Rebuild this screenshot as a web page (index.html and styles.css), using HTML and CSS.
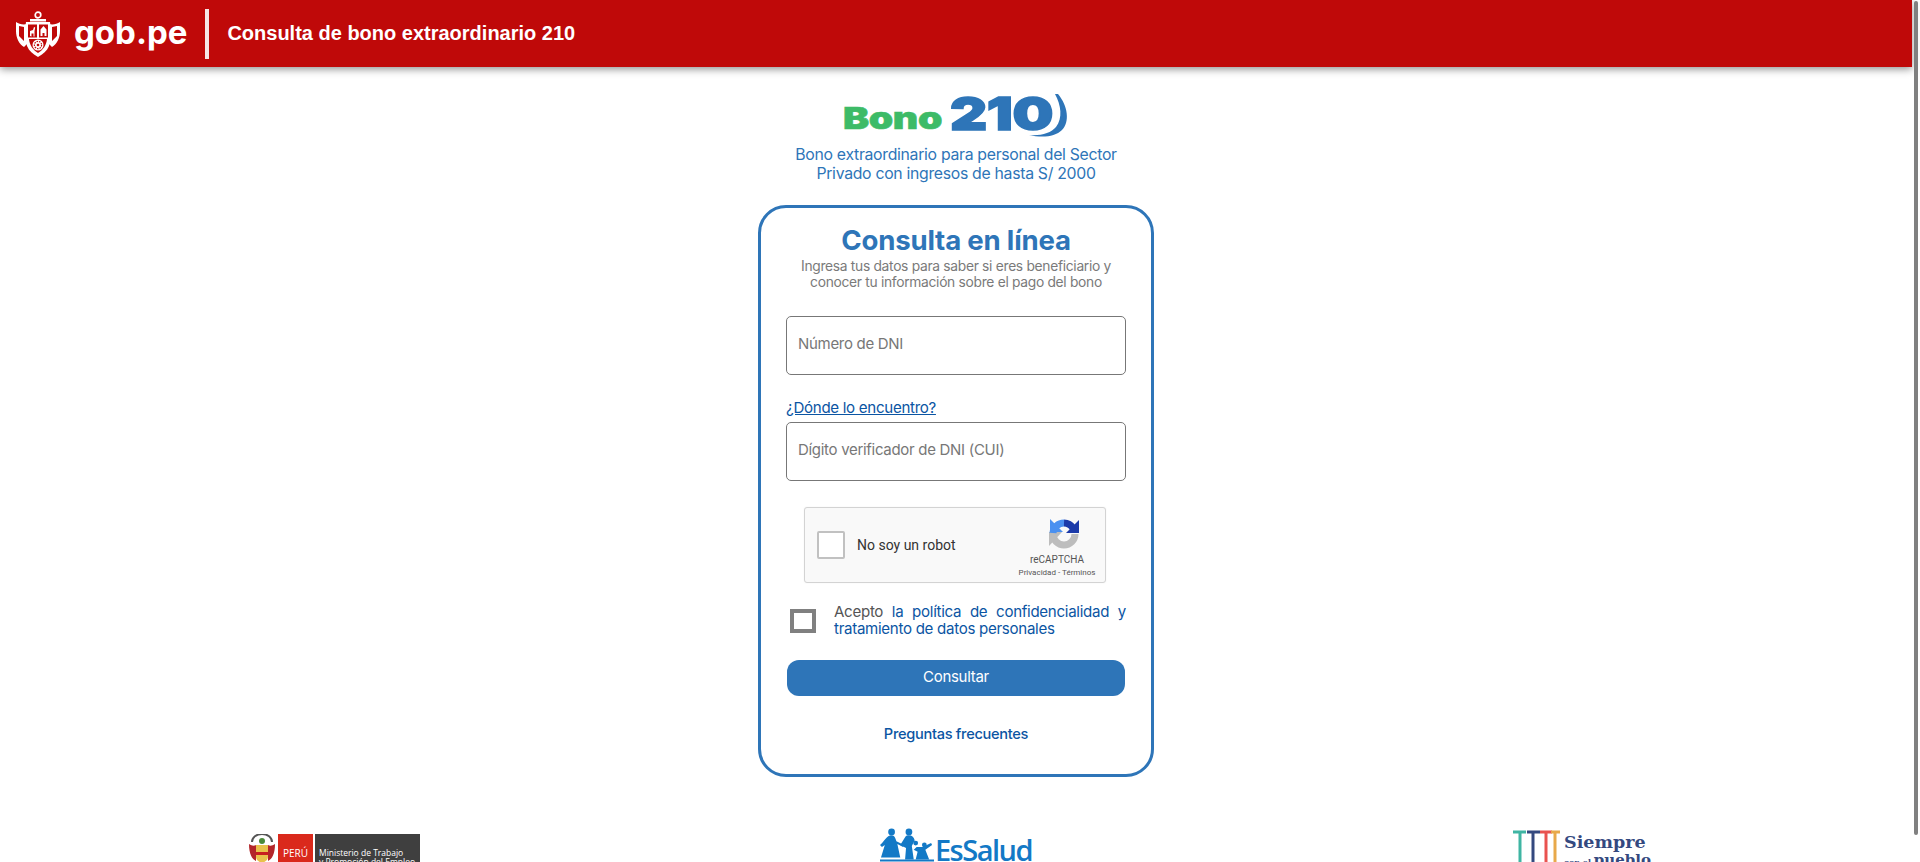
FILE: index.html
```html
<!DOCTYPE html>
<html lang="es">
<head>
<meta charset="utf-8">
<title>Consulta de bono extraordinario 210</title>
<link rel="stylesheet" href="styles.css">
</head>
<body>
<div class="page">
<header class="topbar">
  <svg class="emblem" viewBox="0 0 46 46" aria-hidden="true">
    <circle cx="23" cy="4" r="2.800" fill="none" stroke="#fff" stroke-width="1.700"/>
    <path d="M15 8h16v2.500H15z" fill="#fff"/>
    <path d="M1 11c3 2 7 3 11 2v20l-3 3c-5-3-8-9-8-16zM45 11c-3 2-7 3-11 2v20l3 3c5-3 8-9 8-16z" fill="#fff"/>
    <path d="M4 15l5 1v14l-5-5zM42 15l-5 1v14l5-5z" fill="#bf0909"/>
    <path d="M11 11h24c1.500 9 1 17-1 24-2 5-6 8-11 11-5-3-9-6-11-11-2-7-2.500-15-1-24z" fill="#fff"/>
    <path d="M13 13.500h9v13h-9zM24 13.500h9v13h-9z" fill="#bf0909"/>
    <path d="M15 25v-5l3-1 1-3 1.200.500-.7 3.500v5.500h-1v-3h-2v3zM25.500 25v-6.500l3-3.500 3 3.500v6.500h-2v-3h-2v3z" fill="#fff"/>
    <path d="M14 28h18c-.5 6-4 11-9 14-5-3-8.500-8-9-14z" fill="#bf0909"/>
    <circle cx="23" cy="34" r="5.500" fill="#fff"/>
    <circle cx="23" cy="34" r="3.600" fill="none" stroke="#bf0909" stroke-width="1.200" stroke-dasharray="1.500 1"/>
    <circle cx="23" cy="34" r="1.300" fill="#bf0909"/>
  </svg>
  <span class="brand">gob.pe</span>
  <span class="divider"></span>
  <h1 class="page-title">Consulta de bono extraordinario 210</h1>
</header>

<main class="content">
  <svg class="bono-logo" viewBox="0 0 230 50" role="img" aria-label="Bono 210">
    <text class="bono-word" x="2" y="36" textLength="99" lengthAdjust="spacingAndGlyphs">Bono</text>
    <text class="bono-num" x="109" y="37" textLength="103" lengthAdjust="spacingAndGlyphs">210</text>
    <path class="bono-arc" d="M217 1c10 12 12 28 4 36-7 7-20 8-33 5 12 1 22-2 27-8 7-9 5-22-1-33z"/>
  </svg>
  <p class="tagline">Bono extraordinario para personal del Sector<br>Privado con ingresos de hasta S/ 2000</p>

  <section class="card">
    <h2 class="card-title">Consulta en línea</h2>
    <p class="card-sub">Ingresa tus datos para saber si eres beneficiario y<br>conocer tu información sobre el pago del bono</p>

    <div class="field first-field"><span class="placeholder">Número de DNI</span></div>
    <a class="where-link" href="#">¿Dónde lo encuentro?</a>
    <div class="field"><span class="placeholder">Dígito verificador de DNI (CUI)</span></div>

    <div class="captcha">
      <span class="captcha-box"></span>
      <span class="captcha-label">No soy un robot</span>
      <div class="captcha-brand">
        <svg class="captcha-icon" viewBox="0 0 32 32" aria-hidden="true">
          <path d="M5 16a11 11 0 0 0 22 0" class="cap-grey"/>
          <path d="M1 14h13L1 28z" fill="#bdbdbd"/>
          <path d="M16 5a11 11 0 0 0-11 10" class="cap-light"/>
          <path d="M2 1l13 13H2z" fill="#4a90f0"/>
          <path d="M16 5a11 11 0 0 1 9 5" class="cap-dark"/>
          <path d="M31 2v13H18z" fill="#1c3aa9"/>
        </svg>
        <span class="captcha-name">reCAPTCHA</span>
        <span class="captcha-links">Privacidad - Términos</span>
      </div>
    </div>

    <div class="consent">
      <span class="consent-box"></span>
      <p class="consent-text"><span class="consent-lead">Acepto</span> <a href="#">la política de confidencialidad y tratamiento de datos personales</a></p>
    </div>

    <button class="submit" type="button">Consultar</button>
    <a class="faq" href="#">Preguntas frecuentes</a>
  </section>

  <footer class="logos">
    <div class="logo-cell">
      <div class="mintra">
        <svg class="mintra-shield" viewBox="0 0 28 30" aria-hidden="true">
          <path d="M4 8a10 8 0 0 1 20 0" fill="none" stroke="#555" stroke-width="2"/>
          <circle cx="14" cy="7" r="3" fill="#4a8a3a"/>
          <path d="M1 10c3 2 5 2 7 1v16C4 25 1 20 1 10zM27 10c-3 2-5 2-7 1v16c4-2 7-7 7-17z" fill="#b3262a"/>
          <path d="M8 11h12v12c0 3-3 5-6 6-3-1-6-3-6-6z" fill="#e9c24b"/>
          <path d="M8 18h12v3H8z" fill="#c8201f"/>
        </svg>
        <span class="mintra-peru">PERÚ</span>
        <span class="mintra-name">Ministerio de Trabajo<br>y Promoción del Empleo</span>
      </div>
    </div>
    <div class="logo-cell">
      <div class="essalud">
        <svg class="essalud-people" viewBox="0 0 56 34" aria-hidden="true">
          <circle cx="12" cy="3.500" r="3.500"/>
          <circle cx="30" cy="3.500" r="3.500"/>
          <circle cx="37" cy="15" r="2.500"/>
          <circle cx="46" cy="17" r="2.500"/>
          <path d="M12 7c3 0 4 3 5 6l8 4-1 2-6-3 3 14H1l4-13-3 2-2-2c4-3 7-10 12-10z"/>
          <path d="M30 7c3 0 5 2 6 5l-3 6 2 14h-9l1-12-6-3 5-8c1-2 3-2 4-2z"/>
          <path d="M38 19l6 0 9-4 1 2-7 5 4 10H37l2-8-4-2z"/>
          <path d="M0 32h56v2H0z"/>
        </svg>
        <span class="essalud-name">EsSalud</span>
      </div>
    </div>
    <div class="logo-cell">
      <div class="siempre">
        <svg class="siempre-mark" viewBox="0 0 48 40" aria-hidden="true">
          <g fill="none" stroke-width="3">
            <path d="M0 2h13M7 2v38" stroke="#3fb5a3"/>
            <path d="M14 2h13M20 2v38" stroke="#34497f"/>
            <path d="M27 2h12M33 2v38" stroke="#e9524f"/>
            <path d="M38 2h9M42 2v38" stroke="#e8a94a"/>
          </g>
        </svg>
        <div class="siempre-text">
          <span class="siempre-big">Siempre</span>
          <span class="siempre-small">con el <b>pueblo</b></span>
        </div>
      </div>
    </div>
  </footer>
</main>
</div>
<div class="scroll-thumb"></div>
</body>
</html>
```
FILE: styles.css
```css
* { box-sizing: border-box; }
html, body { height: 100%; overflow: hidden; }
body {
  margin: 0;
  background: #fff;
  font-family: Inter, "Liberation Sans", sans-serif;
  letter-spacing: -0.3px;
}
a { color: #0b55a3; text-decoration: none; }

.page { width: calc(100% - 8px); }
.scroll-thumb {
  position: fixed;
  top: 1px;
  right: 2px;
  width: 4px;
  height: 834px;
  background: #808080;
  border-radius: 2px;
}

.topbar {
  height: 67px;
  background: #bf0909;
  box-shadow: 0 2px 8px rgba(0, 0, 0, 0.45);
  display: flex;
  align-items: center;
  padding-left: 15px;
  color: #fff;
}
.emblem { width: 46px; height: 46px; flex: none; }
.brand {
  margin-left: 13px;
  font-size: 33px;
  font-weight: 700;
  letter-spacing: 0;
  line-height: 1;
  padding-bottom: 3px;
}
.divider {
  width: 4px;
  height: 50px;
  margin-left: 18px;
  background: #f6e6e6;
}
.page-title {
  margin: 0 0 0 18px;
  font-family: "Liberation Sans", Arial, sans-serif;
  font-size: 20px;
  font-weight: 700;
  letter-spacing: 0;
}

.content {
  display: flex;
  flex-direction: column;
  align-items: center;
}
.bono-logo { width: 230px; height: 50px; margin-top: 26px; flex: none; overflow: visible; }
.bono-word { fill: #3dbb67; font-size: 30px; font-weight: 900; stroke: #3dbb67; stroke-width: 0.6px; }
.bono-num { fill: #2e75b8; font-size: 46px; font-weight: 900; stroke: #2e75b8; stroke-width: 1.5px; }
.bono-arc { fill: #2e75b8; }
.tagline {
  margin: 2px 0 0;
  text-align: center;
  color: #2e75b8;
  font-size: 15.800px;
  line-height: 19px;
  font-weight: 400;
}

.card {
  width: 396px;
  height: 572px;
  margin-top: 22px;
  border: 3px solid #2e75b8;
  border-radius: 28px;
  padding: 14px 25px 0;
  display: flex;
  flex-direction: column;
  background: #fff;
}
.card-title {
  margin: 0;
  text-align: center;
  color: #2e75b8;
  font-size: 27.600px;
  font-weight: 700;
  line-height: 36px;
  letter-spacing: -0.2px;
}
.card-sub {
  margin: 0;
  text-align: center;
  color: #7a7a7a;
  font-size: 13.800px;
  line-height: 16px;
}
.field {
  height: 59px;
  border: 1px solid #777;
  border-radius: 5px;
  padding: 0 11px 4px;
  display: flex;
  align-items: center;
}
.first-field { margin-top: 26px; }
.placeholder { color: #777; font-size: 15px; }
.where-link {
  margin-top: 23px;
  height: 24px;
  align-self: flex-start;
  font-size: 15.100px;
  line-height: 20px;
  text-decoration: underline;
}
.captcha {
  width: 302px;
  height: 76px;
  margin: 26px 0 0 18px;
  background: #f9f9f9;
  border: 1px solid #d3d3d3;
  border-radius: 3px;
  box-shadow: 0 0 2px rgba(0, 0, 0, 0.06);
  display: flex;
  align-items: center;
  padding-left: 12px;
  font-family: Roboto, sans-serif;
  letter-spacing: 0;
}
.captcha-box {
  width: 28px;
  height: 28px;
  background: #fff;
  border: 2px solid #c1c1c1;
  border-radius: 2px;
  flex: none;
}
.captcha-label { margin-left: 12px; font-size: 14px; color: #333; }
.captcha-brand {
  margin-left: auto;
  width: 86px;
  display: flex;
  flex-direction: column;
  align-items: center;
  padding-right: 10px;
}
.captcha-icon { width: 32px; height: 32px; margin: 5px 0 0 14px; fill: none; }
.cap-grey { fill: none; stroke: #bdbdbd; stroke-width: 7px; }
.cap-light { fill: none; stroke: #4a90f0; stroke-width: 7px; }
.cap-dark { fill: none; stroke: #1c3aa9; stroke-width: 7px; }
.captcha-name { margin-top: 3px; font-size: 10px; line-height: 13px; color: #555; }
.captcha-links { font-size: 8px; line-height: 11px; color: #555; white-space: nowrap; margin-top: 1px; }

.consent {
  margin-top: 20px;
  display: flex;
  align-items: flex-start;
}
.consent-box {
  width: 26px;
  height: 24px;
  margin: 6px 0 0 4px;
  border: 4px solid #808080;
  background: #fff;
  flex: none;
}
.consent-text {
  margin: 0 0 0 18px;
  flex: 1;
  font-size: 15.100px;
  line-height: 17px;
  text-align: justify;
}
.consent-lead { color: #555; }
.submit {
  margin: 23px 1px 0;
  height: 36px;
  border: 0;
  border-radius: 12px;
  background: #2e75b8;
  color: #fff;
  font-family: inherit;
  font-size: 15px;
  letter-spacing: -0.3px;
  padding-bottom: 5px;
}
.faq {
  margin-top: 28px;
  text-align: center;
  font-size: 14.600px;
  line-height: 20px;
  font-weight: 500;
}

.logos {
  width: 100%;
  margin-top: 49px;
  padding: 0 23px;
  display: grid;
  grid-template-columns: repeat(3, 1fr);
  height: 65px;
}
.logo-cell { display: flex; justify-content: center; align-items: flex-start; }
.mintra {
  display: flex;
  align-items: stretch;
  height: 33px;
  margin-top: 8px;
  font-family: "Open Sans", sans-serif;
  letter-spacing: 0;
  color: #fff;
}
.mintra-shield { width: 28px; height: 30px; margin-right: 2px; }
.mintra-peru {
  width: 35px;
  background: #da291c;
  font-size: 10px;
  text-align: center;
  padding-top: 12px;
}
.mintra-name {
  margin-left: 2px;
  width: 105px;
  background: #3f3f3f;
  font-size: 8.500px;
  line-height: 9px;
  padding: 14px 0 0 4px;
  white-space: nowrap;
}
.essalud { display: flex; align-items: flex-start; margin: 2px 0 0 0; color: #1379c6; }
.essalud-people { width: 54px; height: 34px; fill: #1379c6; flex: none; }
.essalud-name {
  font-size: 29px;
  line-height: 36px;
  margin: 4px 0 0 1px;
  font-family: "Open Sans", sans-serif;
  font-weight: 600;
  letter-spacing: -1.5px;
}
.siempre { display: flex; align-items: flex-start; margin: 4px 0 0 8px; }
.siempre-mark { width: 48px; height: 40px; flex: none; }
.siempre-text {
  display: flex;
  flex-direction: column;
  margin-left: 3px;
  color: #34497f;
  font-family: "DejaVu Serif", serif;
  letter-spacing: 0;
  font-weight: 700;
}
.siempre-big { font-size: 17.500px; line-height: 22px; margin-top: 1px; }
.siempre-small { font-size: 8px; line-height: 15px; white-space: nowrap; text-align: right; }
.siempre-small b { font-size: 15px; }
```
